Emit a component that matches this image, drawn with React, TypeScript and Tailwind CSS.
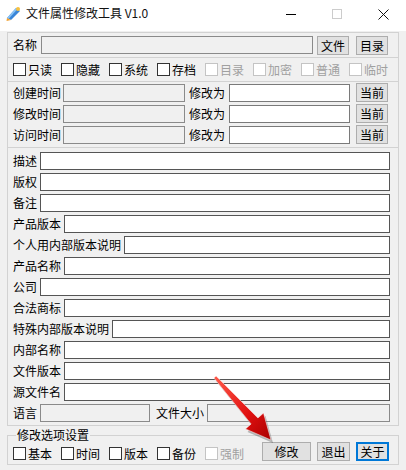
import type { ReactNode } from "react";

const font = "font-['Noto_Sans_CJK_SC','Noto_Sans',sans-serif]";

function Box({ checked = false, disabled = false }: { checked?: boolean; disabled?: boolean }) {
  return (
    <span
      className={`inline-block h-[13px] w-[13px] shrink-0 border bg-white ${
        disabled ? "border-[#c4c4c4]" : "border-[#333333]"
      }`}
    >
      {checked ? "" : null}
    </span>
  );
}

function Check({ label, disabled = false }: { label: string; disabled?: boolean }) {
  return (
    <div className="flex w-[48px] shrink-0 items-center gap-[2px]">
      <Box disabled={disabled} />
      <span className={`leading-[18px] ${disabled ? "text-[#a0a0a0]" : "text-black"}`}>{label}</span>
    </div>
  );
}

function Btn({ children, w = "w-[32px]", focus = false }: { children: ReactNode; w?: string; focus?: boolean }) {
  return (
    <div
      className={`flex h-[19px] ${w} shrink-0 items-center justify-center bg-[#e1e1e1] leading-[17px] ${
        focus ? "border-2 border-[#0078d7]" : "border border-[#adadad]"
      }`}
    >
      {children}
    </div>
  );
}

const fieldRows: { label: string; gray?: boolean }[] = [
  { label: "描述" },
  { label: "版权" },
  { label: "备注" },
  { label: "产品版本" },
  { label: "个人用内部版本说明" },
  { label: "产品名称" },
  { label: "公司" },
  { label: "合法商标" },
  { label: "特殊内部版本说明" },
  { label: "内部名称" },
  { label: "文件版本" },
  { label: "源文件名" },
];

const timeRows = ["创建时间", "修改时间", "访问时间"];

export default function App() {
  return (
    <div className={`relative h-[470px] w-[406px] overflow-hidden bg-[#f0f0f0] text-[12px] text-black ${font}`}>
      {/* title bar */}
      <div className="flex h-[31px] items-start bg-white">
        <svg className="ml-[5px] mt-[5px]" width="17" height="17" viewBox="0 0 17 17">
          <path d="M2 13 L11 3 L15 6 L6 15 Z" fill="#3a86d8" />
          <path d="M2 13 L11 3 L12.5 4 L3.5 14 Z" fill="#8cc4f4" />
          <path d="M2 13 L6 15 L1.5 16 Z" fill="#f0a030" />
          <circle cx="13" cy="4" r="2" fill="#f5c040" />
        </svg>
        <span className="ml-[4px] mt-[4px] leading-[18px] text-[#111]">文件属性修改工具 V1.0</span>
        <div className="ml-auto flex h-[31px]">
          <div className="flex h-[28px] w-[46px] items-center justify-center">
            <span className="block h-px w-[10px] bg-black" />
          </div>
          <div className="flex h-[28px] w-[46px] items-center justify-center">
            <span className="block h-[10px] w-[10px] border border-[#cccccc]" />
          </div>
          <div className="flex h-[28px] w-[46px] items-center justify-center">
            <svg width="11" height="11" viewBox="0 0 11 11">
              <path d="M0.5 0.5 L10.5 10.5 M10.5 0.5 L0.5 10.5" stroke="#111" strokeWidth="1" />
            </svg>
          </div>
        </div>
      </div>

      <div className="px-[7px] pt-px">
        {/* name */}
        <div className="flex h-[26px] items-center border border-[#d2d2d2] pl-[5px]">
          <span className="w-[28px] leading-[18px]">名称</span>
          <div className="h-[18px] w-[272px] border border-[#8a8a8a] bg-[#f0f0f0]" />
          <div className="ml-[4px]">
            <Btn>文件</Btn>
          </div>
          <div className="ml-[7px]">
            <Btn>目录</Btn>
          </div>
        </div>

        {/* attributes */}
        <div className="flex h-[24px] items-center border-x border-b border-[#d2d2d2] pl-[5px]">
          <Check label="只读" />
          <Check label="隐藏" />
          <Check label="系统" />
          <Check label="存档" />
          <Check label="目录" disabled />
          <Check label="加密" disabled />
          <Check label="普通" disabled />
          <Check label="临时" disabled />
        </div>

        {/* times */}
        <div className="flex h-[66px] flex-col gap-[2px] border-x border-b border-[#d2d2d2] pl-[5px] pt-px">
          {timeRows.map((t) => (
            <div key={t} className="flex h-[19px] items-center">
              <span className="w-[50px] leading-[18px]">{t}</span>
              <div className="h-[18px] w-[122px] border border-[#8a8a8a] bg-[#f0f0f0]" />
              <span className="ml-[4px] w-[40px] leading-[18px]">修改为</span>
              <div className="h-[18px] w-[121px] border border-[#7a7a7a] bg-white" />
              <div className="ml-[6px]">
                <Btn>当前</Btn>
              </div>
            </div>
          ))}
        </div>

        {/* version info */}
        <div className="flex h-[278px] flex-col gap-[3px] border-x border-b border-[#d2d2d2] pl-[5px] pr-[8px] pt-[4px]">
          {fieldRows.map((r) => (
            <div key={r.label} className="flex h-[18px] items-center">
              <span className="mr-[3px] shrink-0 leading-[18px]">{r.label}</span>
              <div className="h-[18px] flex-1 border border-[#555555] bg-white" />
            </div>
          ))}
          <div className="flex h-[18px] items-center">
            <span className="mr-[3px] shrink-0 leading-[18px]">语言</span>
            <div className="h-[18px] w-[110px] border border-[#8a8a8a] bg-[#f0f0f0]" />
            <span className="ml-[6px] mr-[3px] shrink-0 leading-[18px]">文件大小</span>
            <div className="h-[18px] flex-1 border border-[#8a8a8a] bg-[#f0f0f0]" />
          </div>
        </div>

        {/* options */}
        <fieldset className="border border-[#d2d2d2] pb-[3px] pl-[5px] pr-[9px]">
          <legend className="ml-[3px] px-[1px] leading-[18px]">修改选项设置</legend>
          <div className="-mt-[2px] flex h-[19px] items-center">
            <div className="mt-[4px] flex">
              <Check label="基本" />
              <Check label="时间" />
              <Check label="版本" />
              <Check label="备份" />
              <Check label="强制" disabled />
            </div>
            <div className="ml-auto flex items-center">
              <Btn w="w-[49px]">修改</Btn>
              <div className="ml-[6px]">
                <Btn w="w-[33px]">退出</Btn>
              </div>
              <div className="ml-[6px]">
                <Btn w="w-[33px]" focus>
                  关于
                </Btn>
              </div>
            </div>
          </div>
        </fieldset>
      </div>

      {/* annotation arrow */}
      <svg className="pointer-events-none absolute left-0 top-0" width="406" height="470" viewBox="0 0 406 470">
        <defs>
          <linearGradient id="ar" x1="0" y1="0" x2="1" y2="1">
            <stop offset="0" stopColor="#ff5a4a" />
            <stop offset="0.6" stopColor="#e01010" />
            <stop offset="1" stopColor="#a80000" />
          </linearGradient>
        </defs>
        <polygon
          points="218.1,379 259.9,421 265.5,416.1 273,443 247.5,431.9 253.1,427 215.9,381"
          fill="#000"
          opacity="0.25"
        />
        <polygon
          points="216.1,376 257.9,418 263.5,413.1 271,440 245.5,428.9 251.1,424 213.9,378"
          fill="url(#ar)"
          stroke="#ffffff"
          strokeOpacity="0.6"
          strokeWidth="0.8"
        />
      </svg>
    </div>
  );
}
